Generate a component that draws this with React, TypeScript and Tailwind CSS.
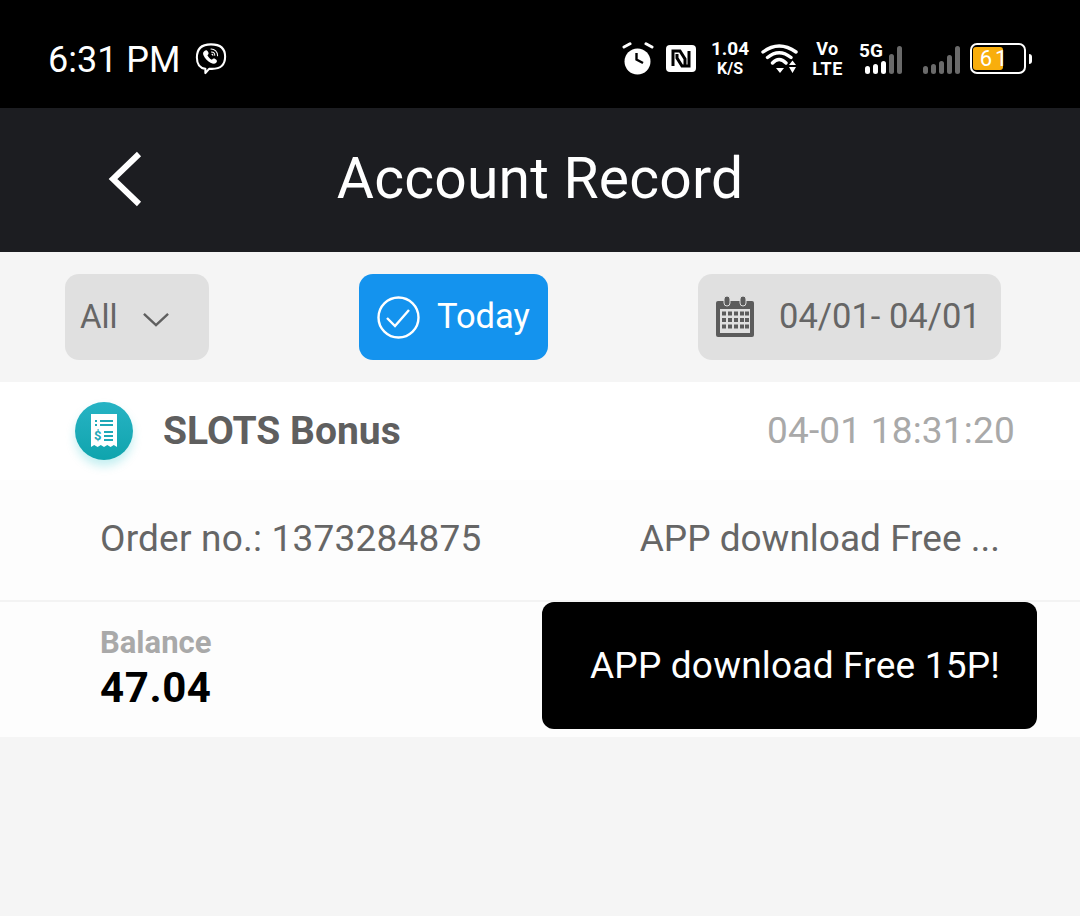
import React from "react";

const font = { fontFamily: "Roboto, sans-serif" };

const ViberIcon = () => (
  <svg width="32" height="33" viewBox="0 0 34 35" fill="none" stroke="#fff" strokeWidth="2.2" strokeLinecap="round" strokeLinejoin="round">
    <path d="M11 28.5c-4 -.5 -9 -3 -9 -12c0 -9 4 -14 15 -14c11 0 15 5 15 13c0 9 -5 13 -14 13c-1 0 -2 0 -3 0l-4 4.500z" />
    <path d="M10 9.500c1.500 -1.500 3 -1 4 1c.8 1.600 .5 2.500 -.8 3.500c.8 2 2.500 3.800 4.800 4.800c1 -1.300 2 -1.600 3.500 -.8c2 1 2.400 2.500 1 4c-1.500 1.400 -3.500 1.200 -6 0c-3.500 -1.800 -6 -4.500 -7.500 -8c-.8 -2 -.5 -3.200 1 -4.500z" fill="#fff" stroke="none" />
    <path d="M17 7.500c4 0 7 3 7 7M17.500 10.500c2 0 3.500 1.500 3.500 3.500M18 13c.6 0 1 .4 1 1" strokeWidth="1.1" />
  </svg>
);

const AlarmIcon = () => (
  <svg width="32" height="34" viewBox="0 0 32 34">
    <circle cx="15.500" cy="19.500" r="13" fill="#fff" />
    <path d="M14.500 11v6.500l6.500 3.500" fill="none" stroke="#000" strokeWidth="2.400" />
    <path d="M2 5l6 -3.200M24 1.800l6 3.200" stroke="#fff" strokeWidth="3" strokeLinecap="round" />
  </svg>
);

const NfcIcon = () => (
  <svg width="30" height="27" viewBox="0 0 30 27">
    <rect width="30" height="27" rx="4" fill="#fff" />
    <path d="M7 21V6h7l5 8v7" fill="none" stroke="#000" strokeWidth="3" />
    <path d="M23 6v15h-7l-5 -8V9" fill="none" stroke="#000" strokeWidth="3" />
  </svg>
);

const WifiIcon = () => (
  <svg width="37" height="31" viewBox="0 0 37 31" fill="none" stroke="#fff" strokeWidth="3.400" strokeLinecap="round">
    <path d="M2 9Q18 -3 35 9M6.500 14.500Q18 5 30 14.500M11.500 20Q18 13 25 20" />
    <path d="M15 25h8l-4 5zM28 22h7l-3.500 -4.500zM28 24h7l-3.500 6z" fill="#fff" stroke="none" />
  </svg>
);

const Bars = ({ lit, heights }: { lit: number; heights: number[] }) => (
  <div className="flex items-end gap-[3px]">
    {heights.map((h, i) => (
      <div
        key={i}
        className={`w-[5px] rounded-full ${i < lit ? "bg-white" : "bg-[#6a6a6a]"}`}
        style={{ height: h }}
      />
    ))}
  </div>
);

const StatusBar = () => (
  <div className="flex h-[108px] items-center bg-black pl-[48px] pr-[48px] pt-[9px] text-white">
    <span className="mt-[2px] text-[36px] leading-none">6:31 PM</span>
    <div className="ml-[14px]"><ViberIcon /></div>
    <div className="ml-auto flex items-center">
      <AlarmIcon />
      <div className="ml-[12px]"><NfcIcon /></div>
      <div className="ml-[15px] flex w-[38px] flex-col items-center font-bold">
        <span className="text-[19px] leading-[20px]">1.04</span>
        <span className="text-[16px] leading-[20px]">K/S</span>
      </div>
      <div className="ml-[12px]"><WifiIcon /></div>
      <div className="ml-[14px] flex w-[31px] flex-col items-center text-[18px] font-bold leading-[20px] tracking-[0.5px]">
        <span>Vo</span>
        <span>LTE</span>
      </div>
      <div className="relative ml-[16px] h-[31px] w-[43px]">
        <span className="absolute left-0 top-[-2px] text-[19px] font-bold leading-none">5G</span>
        <div className="absolute bottom-0 left-[6px]"><Bars lit={3} heights={[8, 10, 13, 20, 28]} /></div>
      </div>
      <div className="ml-[21px] flex h-[31px] items-end"><Bars lit={0} heights={[8, 10, 13, 19, 28]} /></div>
      <div className="relative ml-[10px] h-[31px] w-[56px] rounded-[7px] border-2 border-white">
        <div className="absolute bottom-[2px] left-[1px] top-[2px] w-[30px] rounded-[3px] bg-[#f9ae0c]" />
        <span className="absolute inset-0 flex items-center justify-center pr-[6px] text-[22px] leading-none tracking-[3px]">61</span>
      </div>
      <div className="ml-[3px] h-[10px] w-[3px] rounded-r-sm bg-white" />
    </div>
  </div>
);

const Filters = () => (
  <div className="flex h-[130px] items-center justify-between bg-[#f5f5f5] pl-[65px] pr-[79px]">
    <div className="flex h-[86px] w-[144px] items-center rounded-[14px] bg-[#e0e0e0] pl-[15px] text-[33px] text-[#666]">
      <span>All</span>
      <svg className="ml-[25px] mt-[5px]" width="26" height="16" viewBox="0 0 28 16" fill="none" stroke="#5f5f5f" strokeWidth="2.600">
        <path d="M1 1.500l13 12l13 -12" />
      </svg>
    </div>
    <div className="flex h-[86px] w-[189px] items-center rounded-[14px] bg-[#1493ee] pl-[18px] text-[34.5px] text-white">
      <svg width="43" height="43" viewBox="0 0 43 43" fill="none" stroke="#fff" strokeWidth="2.400">
        <circle cx="21.500" cy="21.500" r="20" />
        <path d="M10 22l8 8l14 -16" />
      </svg>
      <span className="ml-[17px]">Today</span>
    </div>
    <div className="flex h-[86px] w-[303px] items-center rounded-[14px] bg-[#e0e0e0] pl-[17px] text-[34.5px] text-[#666]">
      <svg width="40" height="44" viewBox="0 0 40 44">
        <path d="M3 6h34a2 2 0 0 1 2 2v32a2 2 0 0 1 -2 2H3a2 2 0 0 1 -2 -2V8a2 2 0 0 1 2 -2z" fill="#5c5c5c" />
        <rect x="5" y="14" width="30" height="24" fill="#e0e0e0" />
        <rect x="9" y="1" width="6" height="10" rx="3" fill="#5c5c5c" stroke="#e0e0e0" strokeWidth="1" />
        <rect x="25" y="1" width="6" height="10" rx="3" fill="#5c5c5c" stroke="#e0e0e0" strokeWidth="1" />
        {[16.500, 23, 29.500].map((y) =>
          [7, 13, 19, 25, 30].map((x) => <rect key={`${x}-${y}`} x={x} y={y} width="4" height="4" fill="#5c5c5c" />)
        )}
      </svg>
      <span className="ml-[24px]">04/01- 04/01</span>
    </div>
  </div>
);

const ReceiptBadge = () => (
  <div className="flex h-[58px] w-[58px] items-center justify-center rounded-full bg-gradient-to-b from-[#26b3c4] to-[#0ea4ad] shadow-[0_6px_10px_rgba(20,190,200,0.25)]">
    <svg width="30" height="36" viewBox="0 0 30 36">
      <path d="M2 1h26v33l-3.200 -2l-3.200 2l-3.300 -2l-3.300 2l-3.200 -2l-3.200 2l-3.400 -2L2 34z" fill="#fff" />
      <g stroke="#1fa9b8" strokeWidth="2">
        <path d="M6 8h2M6 12h2M11 8h13M11 12h13M15 19h9M15 23h9M15 27h9" />
      </g>
      <text x="5" y="27" fontSize="13" fontWeight="700" fill="#1fa9b8" fontFamily="Roboto, sans-serif">$</text>
    </svg>
  </div>
);

const Record = () => (
  <div>
    <div className="flex h-[98px] items-center bg-white pl-[75px] pr-[65px]">
      <div className="mt-[-1px]"><ReceiptBadge /></div>
      <span className="ml-[30px] text-[39px] font-bold text-[#5f5f5f]">SLOTS Bonus</span>
      <span className="ml-auto text-[37px] tracking-[0.2px] text-[#a9a9a9]">04-01 18:31:20</span>
    </div>
    <div className="flex h-[122px] items-center justify-between border-b-2 border-[#f3f3f3] bg-[#fdfdfd] pb-[3px] pl-[100px] pr-[80px] text-[37px] text-[#666]">
      <span className="tracking-[0.2px]">Order no.: 1373284875</span>
      <span>APP download Free ...</span>
    </div>
    <div className="relative h-[135px] bg-[#fdfdfd] pl-[100px] pt-[23px]">
      <div className="text-[31px] font-bold leading-[36px] text-[#a9a9a9]">Balance</div>
      <div className="text-[42px] font-bold leading-[54px] tracking-[0.6px] text-black">47.04</div>
      <div className="absolute left-[542px] top-0 flex h-[127px] w-[495px] items-center rounded-[12px] bg-black pl-[48px] text-[37px] tracking-[0.2px] text-white">
        APP download Free 15P!
      </div>
    </div>
  </div>
);

export default function App() {
  return (
    <div className="flex h-[916px] w-[1080px] flex-col overflow-hidden bg-[#f5f5f5]" style={font}>
      <StatusBar />
      <div className="relative flex h-[144px] items-center justify-center bg-[#1c1d21] pb-[3px] text-white">
        <svg className="absolute left-[108px] top-[43px]" width="34" height="56" viewBox="0 0 34 56" fill="none" stroke="#fff" strokeWidth="6">
          <path d="M31 3L5 28l26 25" />
        </svg>
        <span className="text-[57px] leading-none tracking-[0.2px]">Account Record</span>
      </div>
      <Filters />
      <Record />
    </div>
  );
}
